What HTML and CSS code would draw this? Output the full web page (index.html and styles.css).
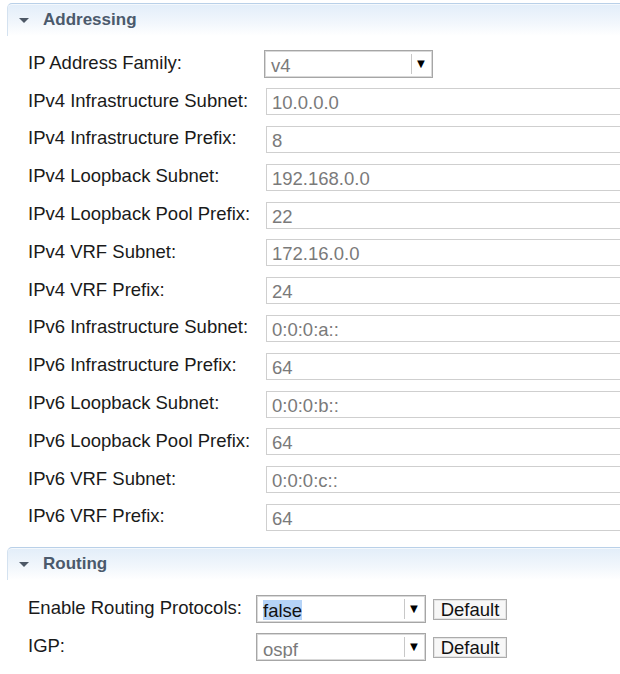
FILE: index.html
```html
<!DOCTYPE html>
<html>
<head>
<meta charset="utf-8">
<link rel="stylesheet" href="styles.css">
</head>
<body>
<div class="panel">
  <div class="section-head"><span class="tri"></span><span class="title">Addressing</span></div>
  <div class="form addressing">
    <div class="row"><label>IP Address Family:</label><div class="select narrow"><span class="val gray">v4</span><span class="arrow">▼</span></div></div>
    <div class="row"><label>IPv4 Infrastructure Subnet:</label><div class="input">10.0.0.0</div></div>
    <div class="row"><label>IPv4 Infrastructure Prefix:</label><div class="input">8</div></div>
    <div class="row"><label>IPv4 Loopback Subnet:</label><div class="input">192.168.0.0</div></div>
    <div class="row"><label>IPv4 Loopback Pool Prefix:</label><div class="input">22</div></div>
    <div class="row"><label>IPv4 VRF Subnet:</label><div class="input">172.16.0.0</div></div>
    <div class="row"><label>IPv4 VRF Prefix:</label><div class="input">24</div></div>
    <div class="row"><label>IPv6 Infrastructure Subnet:</label><div class="input">0:0:0:a::</div></div>
    <div class="row"><label>IPv6 Infrastructure Prefix:</label><div class="input">64</div></div>
    <div class="row"><label>IPv6 Loopback Subnet:</label><div class="input">0:0:0:b::</div></div>
    <div class="row"><label>IPv6 Loopback Pool Prefix:</label><div class="input">64</div></div>
    <div class="row"><label>IPv6 VRF Subnet:</label><div class="input">0:0:0:c::</div></div>
    <div class="row"><label>IPv6 VRF Prefix:</label><div class="input">64</div></div>
  </div>
  <div class="section-head routing-head"><span class="tri"></span><span class="title">Routing</span></div>
  <div class="form routing">
    <div class="row"><label>Enable Routing Protocols:</label><div class="select wide"><span class="val"><span class="sel">false</span></span><span class="arrow">▼</span></div><div class="btn">Default</div></div>
    <div class="row"><label>IGP:</label><div class="select wide"><span class="val gray low">ospf</span><span class="arrow">▼</span></div><div class="btn">Default</div></div>
  </div>
</div>
</body>
</html>
```
FILE: styles.css
```css
html, body {
  margin: 0;
  padding: 0;
  background: #fff;
  overflow: hidden;
}
body {
  font-family: "Liberation Sans", Arial, sans-serif;
  font-size: 18.5px;
  color: #1a1a1a;
}
.panel {
  padding-top: 3px;
  padding-left: 7px;
}
.section-head {
  height: 32px;
  display: flex;
  align-items: center;
  border-top: 1px solid #b9d0e8;
  border-left: 1px solid #d4e2f0;
  border-top-left-radius: 5px;
  background: linear-gradient(to bottom, #e2edf9 0%, #f2f7fc 60%, #ffffff 100%);
  box-shadow: inset 0 1px 0 #f4f8fc;
}
.tri {
  width: 0;
  height: 0;
  margin-left: 11px;
  margin-top: 1px;
  border-left: 5px solid transparent;
  border-right: 5px solid transparent;
  border-top: 5px solid #4d5866;
}
.title {
  margin-left: 14px;
  font-weight: bold;
  font-size: 17px;
  color: #4b5a6c;
}
.form {
  padding-left: 21px;
}
.addressing {
  padding-top: 9px;
  padding-bottom: 11px;
}
.routing {
  padding-top: 10px;
}
.row {
  height: 37.8px;
  display: flex;
  align-items: center;
}
.routing .row { height: 38px; }
label {
  width: 236px;
  flex: none;
  color: #1a1a1a;
  position: relative;
  top: -1px;
  white-space: nowrap;
}
.routing label { width: 228px; }
.input {
  flex: none;
  width: 380px;
  height: 25px;
  margin-left: 2px;
  border: 1px solid #cfcfcf;
  color: #7a7a7a;
  line-height: 27px;
  padding-left: 5px;
  box-sizing: content-box;
}
.select {
  flex: none;
  height: 22px;
  border: 1px solid #a6a6a6;
  box-shadow: inset 0 0 0 1px #d9d9d9;
  padding: 2px;
  display: flex;
  align-items: stretch;
  overflow: hidden;
  background: #fff;
}
.select.narrow { width: 163px; }
.select.wide { width: 164px; }
.val {
  flex: 1;
  padding-left: 4px;
  line-height: 26px;
  overflow: hidden;
  white-space: nowrap;
  color: #111;
}
.val.gray { color: #7a7a7a; }
.val.low { line-height: 28px; }
.sel {
  background: #b5d3f7;
}
.arrow {
  flex: none;
  width: 18px;
  margin: 1px 0;
  border-left: 1px solid #c8c8c8;
  font-size: 13px;
  text-align: center;
  line-height: 19px;
  color: #000;
}
.btn {
  flex: none;
  margin-left: 7px;
  width: 72px;
  height: 19px;
  border: 1px solid #ababab;
  box-shadow: inset 0 0 0 1px #e4e4e4;
  background: #f7f7f7;
  text-align: center;
  line-height: 20px;
  color: #111;
}
```
